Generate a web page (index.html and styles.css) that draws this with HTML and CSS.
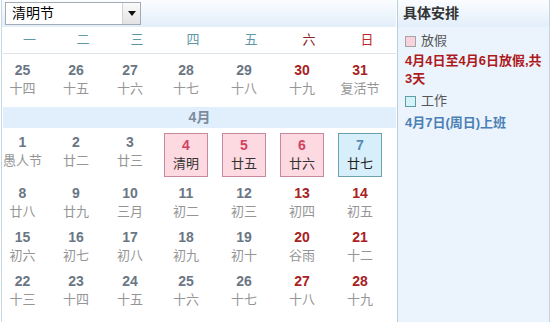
FILE: index.html
```html
<!DOCTYPE html>
<html lang="zh-CN">
<head>
<meta charset="utf-8">
<title>日历</title>
<link rel="stylesheet" href="styles.css">
</head>
<body>
<div class="page">
  <div class="cal">
    <div class="cal-top">
      <div class="select">
        <span class="sel-text">清明节</span>
        <span class="sel-btn"><svg width="8" height="5" viewBox="0 0 8 5"><polygon points="0,0 8,0 4,5" fill="#111"/></svg></span>
      </div>
    </div>
    <div class="grid weekdays">
      <div class="wd">一</div><div class="wd">二</div><div class="wd">三</div><div class="wd">四</div><div class="wd">五</div><div class="wd sat">六</div><div class="wd sun">日</div>
    </div>
    <div class="grid week first">
      <div class="day"><div class="num">25</div><div class="lun">十四</div></div>
      <div class="day"><div class="num">26</div><div class="lun">十五</div></div>
      <div class="day"><div class="num">27</div><div class="lun">十六</div></div>
      <div class="day"><div class="num">28</div><div class="lun">十七</div></div>
      <div class="day"><div class="num">29</div><div class="lun">十八</div></div>
      <div class="day wkend"><div class="num">30</div><div class="lun">十九</div></div>
      <div class="day wkend"><div class="num">31</div><div class="lun">复活节</div></div>
    </div>
    <div class="month-bar">4月</div>
    <div class="grid week boxed">
      <div class="day"><div class="num">1</div><div class="lun">愚人节</div></div>
      <div class="day"><div class="num">2</div><div class="lun">廿二</div></div>
      <div class="day"><div class="num">3</div><div class="lun">廿三</div></div>
      <div class="day"><div class="box hol"><div class="num">4</div><div class="lun">清明</div></div></div>
      <div class="day"><div class="box hol"><div class="num">5</div><div class="lun">廿五</div></div></div>
      <div class="day"><div class="box hol"><div class="num">6</div><div class="lun">廿六</div></div></div>
      <div class="day"><div class="box work"><div class="num">7</div><div class="lun">廿七</div></div></div>
    </div>
    <div class="grid week after">
      <div class="day"><div class="num">8</div><div class="lun">廿八</div></div>
      <div class="day"><div class="num">9</div><div class="lun">廿九</div></div>
      <div class="day"><div class="num">10</div><div class="lun">三月</div></div>
      <div class="day"><div class="num">11</div><div class="lun">初二</div></div>
      <div class="day"><div class="num">12</div><div class="lun">初三</div></div>
      <div class="day wkend"><div class="num">13</div><div class="lun">初四</div></div>
      <div class="day wkend"><div class="num">14</div><div class="lun">初五</div></div>
    </div>
    <div class="grid week">
      <div class="day"><div class="num">15</div><div class="lun">初六</div></div>
      <div class="day"><div class="num">16</div><div class="lun">初七</div></div>
      <div class="day"><div class="num">17</div><div class="lun">初八</div></div>
      <div class="day"><div class="num">18</div><div class="lun">初九</div></div>
      <div class="day"><div class="num">19</div><div class="lun">初十</div></div>
      <div class="day wkend"><div class="num">20</div><div class="lun">谷雨</div></div>
      <div class="day wkend"><div class="num">21</div><div class="lun">十二</div></div>
    </div>
    <div class="grid week">
      <div class="day"><div class="num">22</div><div class="lun">十三</div></div>
      <div class="day"><div class="num">23</div><div class="lun">十四</div></div>
      <div class="day"><div class="num">24</div><div class="lun">十五</div></div>
      <div class="day"><div class="num">25</div><div class="lun">十六</div></div>
      <div class="day"><div class="num">26</div><div class="lun">十七</div></div>
      <div class="day wkend"><div class="num">27</div><div class="lun">十八</div></div>
      <div class="day wkend"><div class="num">28</div><div class="lun">十九</div></div>
    </div>
  </div>
  <div class="side">
    <div class="side-top">具体安排</div>
    <div class="side-body">
      <div class="legend"><span class="sq sq-hol"></span>放假</div>
      <div class="note note-hol">4月4日至4月6日放假,共3天</div>
      <div class="legend legend-work"><span class="sq sq-work"></span>工作</div>
      <div class="note note-work">4月7日(周日)上班</div>
    </div>
  </div>
</div>
</body>
</html>
```

FILE: styles.css
```css
* { box-sizing: border-box; }
html, body { margin: 0; padding: 0; background: #fff; }
body {
  font-family: "Liberation Sans", "Noto Sans CJK SC", sans-serif;
  width: 552px;
  height: 322px;
  overflow: hidden;
}
.page {
  display: flex;
  height: 322px;
}
.cal {
  margin-left: 1px;
  width: 395px;
  border-left: 1px solid #c6d8e4;
  padding-left: 1px;
  background: #fff;
}
.cal-top {
  height: 27px;
  margin-left: -1px;
  padding: 2px 0 0 3px;
  background: linear-gradient(#fbfdff, #e2eefa);
}
.select {
  width: 136px;
  height: 23px;
  border: 1px solid #a4abb4;
  background: #fff;
  display: flex;
}
.sel-text {
  flex: 1;
  font-size: 14px;
  line-height: 21px;
  padding-left: 6px;
  color: #000;
}
.sel-btn {
  width: 18px;
  border-left: 1px solid #cfd3d8;
  background: linear-gradient(#fafafa, #e3e3e3);
  display: flex;
  align-items: center;
  justify-content: center;
}
.grid {
  display: grid;
  grid-template-columns: 53px 54px 54px 58px 58px 58px 58px;
}
.weekdays {
  height: 27px;
  border-bottom: 1px solid #dde4ea;
}
.wd {
  text-align: center;
  font-size: 13px;
  line-height: 26px;
  color: #6198a8;
}
.wd.sat { color: #8e2424; }
.wd.sun { color: #c22a2a; }
.week { height: 44px; }
.week.first { margin-top: 2px; }
.week.boxed { height: 49px; }
.week.after { margin-top: 2px; }
.day {
  padding: 5px 14px 0 0;
  text-align: center;
}
.num {
  font-size: 14px;
  font-weight: bold;
  line-height: 18px;
  color: #6b7684;
}
.lun {
  font-size: 13px;
  line-height: 20px;
  color: #959595;
}
.wkend .num { color: #a82222; }
.box {
  height: 44px;
  border: 1px solid;
  padding-top: 2px;
}
.box.hol { background: #fdd9e2; border-color: #c8899c; }
.box.hol .num { color: #d2435f; }
.box.hol .lun { color: #333; }
.box.work { background: #d7effb; border-color: #6aa3ad; }
.box.work .num { color: #5689b6; }
.box.work .lun { color: #222; }
.month-bar {
  margin-top: 7px;
  height: 21px;
  background: #e1eefb;
  text-align: center;
  font-size: 14px;
  font-weight: bold;
  line-height: 21px;
  color: #7a8c9d;
}
.side {
  margin-left: 1px;
  width: 153px;
  border-left: 1px solid #bacdda;
  border-right: 1px solid #c4d5e1;
  background: #ebf3fc;
}
.side-top {
  height: 27px;
  padding-left: 5px;
  background: linear-gradient(#fbfdff, #e2eefa);
  font-size: 14px;
  font-weight: bold;
  line-height: 26px;
  color: #333;
}
.side-body {
  padding: 4px 2px 0 7px;
}
.legend {
  font-size: 13px;
  line-height: 20px;
  color: #555;
  display: flex;
  align-items: center;
}
.legend-work { margin-top: 3px; }
.sq {
  width: 11px;
  height: 11px;
  border: 1px solid;
  margin-right: 5px;
}
.sq-hol { background: #f7d3de; border-color: #a8a3a6; }
.sq-work { background: #d5f2f9; border-color: #5b9fa8; }
.note {
  font-size: 13px;
  font-weight: bold;
  line-height: 18px;
}
.note-hol { color: #ae1b1e; margin-top: 1px; }
.note-work { color: #4a80b5; margin-top: 3px; }
```
